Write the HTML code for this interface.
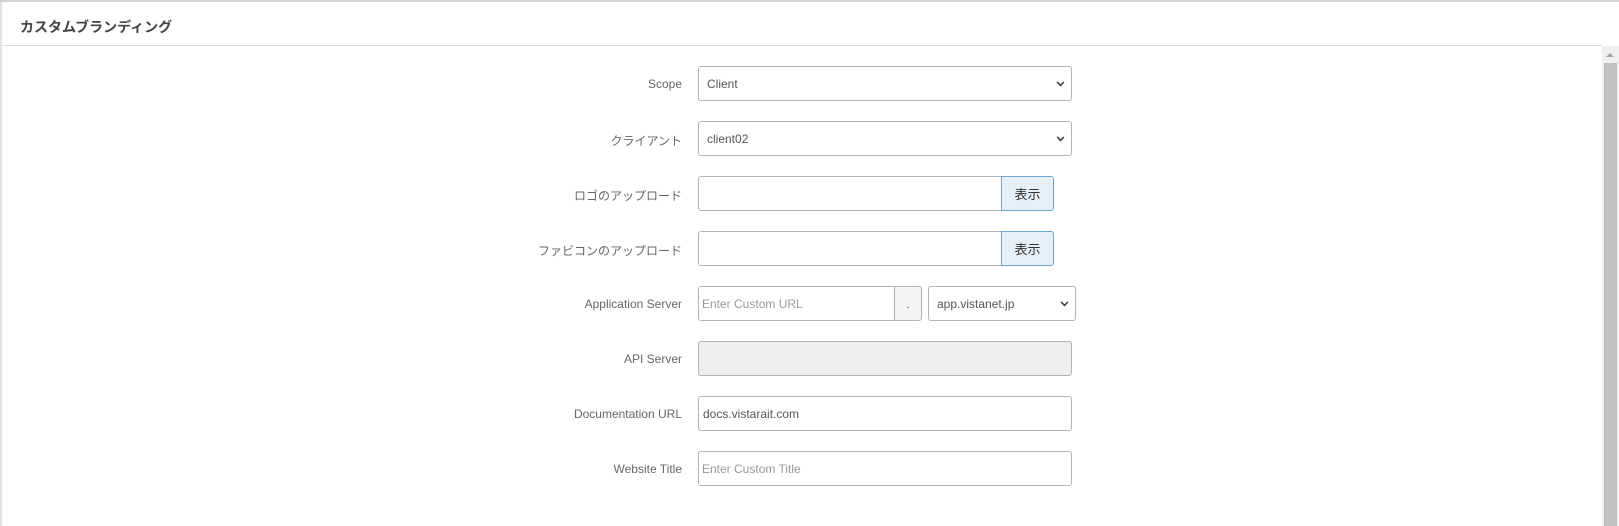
<!DOCTYPE html>
<html><head><meta charset="utf-8"><style>
*{box-sizing:border-box;margin:0;padding:0}
body{width:1619px;height:526px;overflow:hidden;background:#fff;font-family:"Liberation Sans","Noto Sans CJK JP",sans-serif;position:relative}
.top{position:absolute;left:0;top:0;width:1619px;height:2px;background:#d4d4d4}
.left{position:absolute;left:0;top:2px;width:2px;height:524px;background:#e2e2e2}
.title{position:absolute;left:20px;top:17px;font-size:14px;font-weight:bold;color:#444}
.hline{position:absolute;left:0;top:45px;width:1602px;height:1px;background:#ddd}
.sb{position:absolute;left:1602px;top:46px;width:17px;height:480px;background:#f0f0f0}
.thumb{position:absolute;left:1604px;top:63px;width:13px;height:463px;background:#c1c1c1}
.arr{position:absolute;left:1606px;top:53px;width:0;height:0;border-left:4px solid transparent;border-right:4px solid transparent;border-bottom:4px solid #a3a3a3}
.lbl{position:absolute;right:937px;font-size:12px;color:#666;text-align:right;white-space:nowrap}
.box{position:absolute;border:1px solid #b4b4b4;border-radius:3px;background:#fff;font-size:12px;color:#555;padding-left:8px;display:flex;align-items:center;height:35px}
.ph{color:#999;padding-left:3px}
.chev{position:absolute;right:7px;top:12px;width:7px;height:7px;border-right:2px solid #444;border-bottom:2px solid #444;transform:rotate(45deg) scale(.8)}
.btn{position:absolute;border:1px solid #6ea6d0;border-radius:0 3px 3px 0;background:#e6eff5;font-size:13px;color:#333;display:flex;align-items:center;justify-content:center;height:35px}
</style></head><body>
<div class="top"></div><div class="left"></div>
<div class="title">カスタムブランディング</div>
<div class="hline"></div>
<div class="sb"></div><div class="thumb"></div><div class="arr"></div>

<div class="lbl" style="top:77px">Scope</div>
<div class="box" style="left:698px;top:66px;width:374px">Client<span class="chev"></span></div>

<div class="lbl" style="top:132px">クライアント</div>
<div class="box" style="left:698px;top:121px;width:374px">client02<span class="chev"></span></div>

<div class="lbl" style="top:187px">ロゴのアップロード</div>
<div class="box" style="left:698px;top:176px;width:304px;border-radius:3px 0 0 3px"></div>
<div class="btn" style="left:1001px;top:176px;width:53px">表示</div>

<div class="lbl" style="top:242px">ファビコンのアップロード</div>
<div class="box" style="left:698px;top:231px;width:304px;border-radius:3px 0 0 3px"></div>
<div class="btn" style="left:1001px;top:231px;width:53px">表示</div>

<div class="lbl" style="top:297px">Application Server</div>
<div class="box" style="left:698px;top:286px;width:197px;border-radius:3px 0 0 3px;padding-left:0"><span class="ph">Enter Custom URL</span></div>
<div class="box" style="left:894px;top:286px;width:28px;border-radius:0 3px 3px 0;background:#f4f4f4;justify-content:center;padding:0">.</div>
<div class="box" style="left:928px;top:286px;width:148px">app.vistanet.jp<span class="chev"></span></div>

<div class="lbl" style="top:352px">API Server</div>
<div class="box" style="left:698px;top:341px;width:374px;background:#eee"></div>

<div class="lbl" style="top:407px">Documentation URL</div>
<div class="box" style="left:698px;top:396px;width:374px;padding-left:4px">docs.vistarait.com</div>

<div class="lbl" style="top:462px">Website Title</div>
<div class="box" style="left:698px;top:451px;width:374px;padding-left:0"><span class="ph">Enter Custom Title</span></div>
</body></html>
